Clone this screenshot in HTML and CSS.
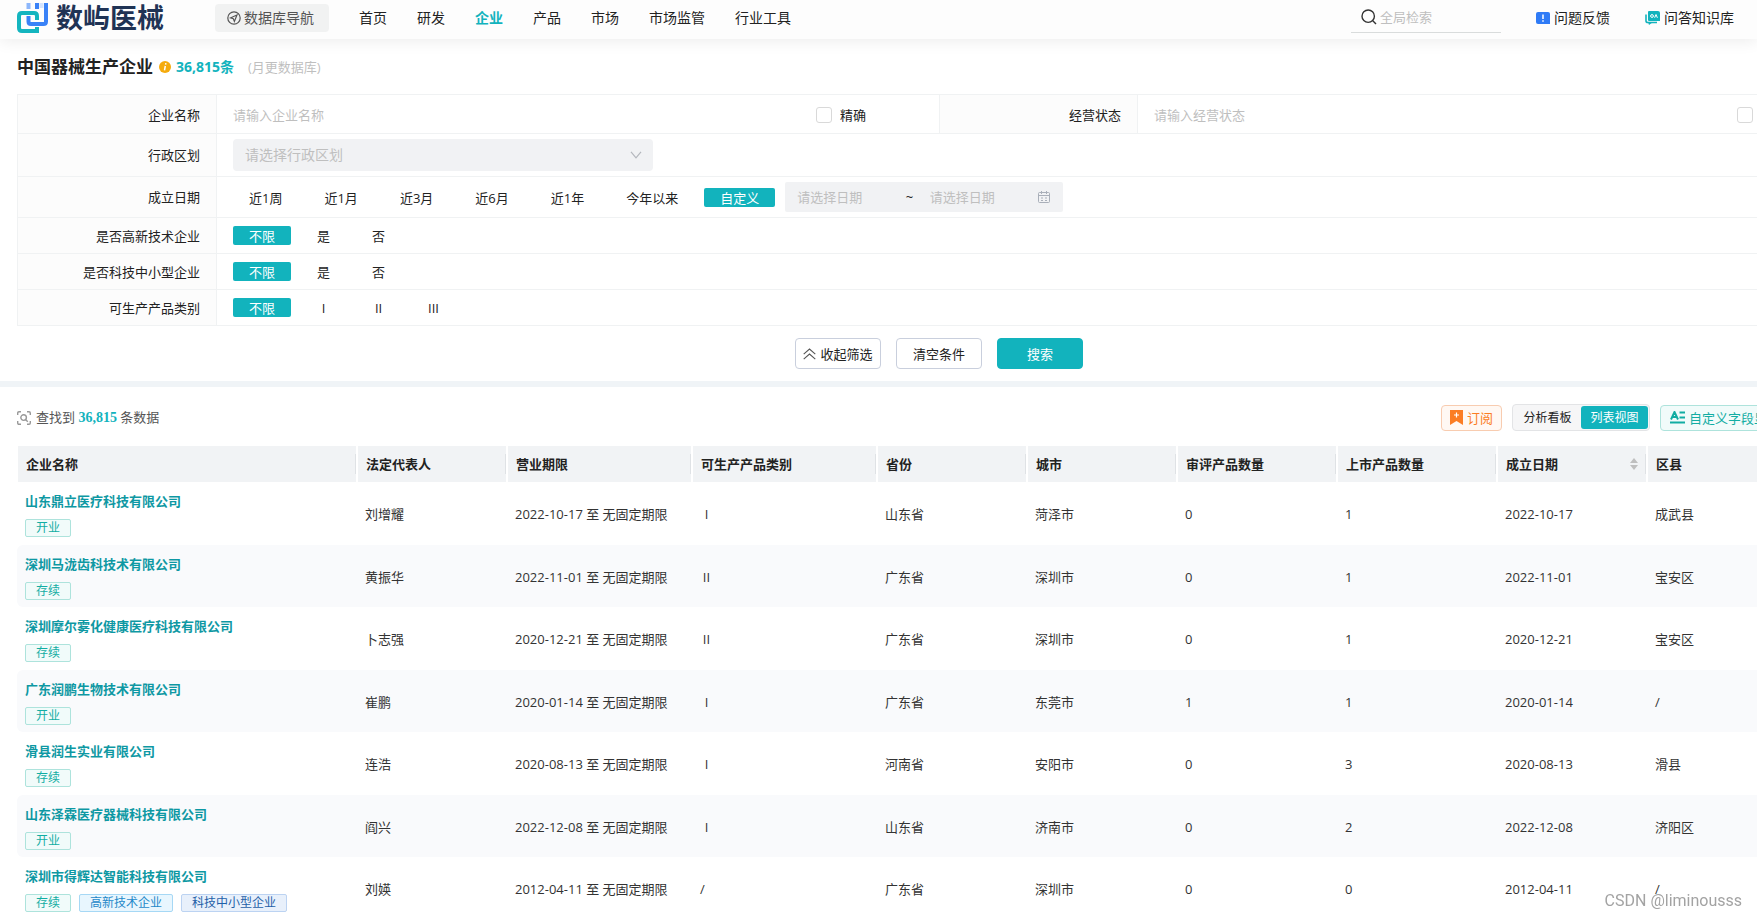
FILE: index.html
```html
<!DOCTYPE html>
<html lang="zh-CN">
<head>
<meta charset="utf-8">
<title>中国器械生产企业</title>
<link rel="stylesheet" href="styles.css">
</head>
<body>
<header class="topbar">
  <a class="brand" href="#">
    <svg class="brand-mark" width="32" height="32" viewBox="0 0 32 32" fill="none" stroke-width="4">
      <path d="M11.5 1V7" stroke="#8db7fb"/><path d="M24.5 1V6" stroke="#d3e3fe"/><path d="M20 1V7" stroke="#3a82f7"/>
      <path d="M29 1V19.5Q29 22 26.5 22H14Q11.5 22 11.5 19.5V14" stroke="#3a82f7"/>
      <path d="M20 18V14Q20 11 17 11H5Q2 11 2 14V26Q2 29 5 29H20V25" stroke="#14b5bf"/>
    </svg>
    <span class="brand-name">数屿医械</span>
  </a>
  <button class="db-nav" type="button">
    <svg width="14" height="14" viewBox="0 0 14 14" fill="none" stroke="#555" stroke-width="1.2"><circle cx="7" cy="7" r="6.2"/><path d="M10 4 3.6 6.8 6.3 7.7 7.4 10.4Z"/></svg>
    数据库导航
  </button>
  <nav class="menu">
    <a href="#">首页</a><a href="#">研发</a><a class="current" href="#">企业</a><a href="#">产品</a><a href="#">市场</a><a href="#">市场监管</a><a href="#">行业工具</a>
  </nav>
  <label class="search">
    <svg width="16" height="16" viewBox="0 0 16 16" fill="none" stroke="#333" stroke-width="1.4"><circle cx="7.2" cy="7.2" r="6.2"/><path d="M11.8 11.8 15 15"/></svg>
    <input type="text" placeholder="全局检索" aria-label="全局检索">
  </label>
  <a class="help" href="#">
    <svg width="14" height="12" viewBox="0 0 14 12"><path d="M2 0H12Q14 0 14 2V12H2Q0 12 0 10V2Q0 0 2 0Z" fill="#2f7bf6"/><path d="M7 2.5V7M7 8.3V9.8" stroke="#fff" stroke-width="1.5"/></svg>
    问题反馈
  </a>
  <a class="help" href="#">
    <svg width="15" height="14" viewBox="0 0 15 14"><path d="M4 0H13Q15 0 15 2V10H4Q3 10 3 9V1Q3 0 4 0Z" fill="#12b3bd"/><path d="M1 3.5V10Q1 11.5 3 11.5H12" stroke="#12b3bd" fill="none" stroke-width="1.6"/><path d="M3 11H8L4 14Z" fill="#12b3bd"/><circle cx="7" cy="5" r="1.4" fill="none" stroke="#fff"/><path d="M9.6 6.8 11 3.5 12.4 6.8" fill="none" stroke="#fff"/></svg>
    问答知识库
  </a>
</header>

<main class="page">
  <div class="heading">
    <h1>中国器械生产企业</h1>
    <svg width="12" height="12" viewBox="0 0 12 12"><circle cx="6" cy="6" r="6" fill="#f5ab0c"/><path d="M6.9 2.2 6.6 3.6M6.3 5 5.5 9.4" stroke="#fff" stroke-width="1.5"/></svg>
    <strong>36,815条</strong>
    <span class="note">(月更数据库)</span>
  </div>

  <form class="filters">
    <div class="row row-text">
      <label class="name" for="company">企业名称</label>
      <div class="field">
        <input class="plain" id="company" type="text" placeholder="请输入企业名称">
        <label class="exact"><input type="checkbox">精确</label>
      </div>
      <label class="name name-second" for="state">经营状态</label>
      <div class="field">
        <input class="plain" id="state" type="text" placeholder="请输入经营状态">
        <label class="exact"><input type="checkbox">精确</label>
      </div>
    </div>
    <div class="row row-region">
      <label class="name" for="region">行政区划</label>
      <div class="field">
        <div class="select">
          <select id="region"><option>请选择行政区划</option></select>
          <svg width="12" height="8" viewBox="0 0 12 8" fill="none" stroke="#b4b7bd" stroke-width="1.2"><path d="M1 .8 6 6.8 11 .8"/></svg>
        </div>
      </div>
    </div>
    <div class="row row-date">
      <span class="name">成立日期</span>
      <div class="field options">
        <button type="button">近1周</button><button type="button">近1月</button><button type="button">近3月</button><button type="button">近6月</button><button type="button">近1年</button><button type="button">今年以来</button><button class="on" type="button">自定义</button>
        <div class="range">
          <input type="text" placeholder="请选择日期" aria-label="开始日期"><span class="tilde">~</span><input type="text" placeholder="请选择日期" aria-label="结束日期">
          <svg width="12" height="12" viewBox="0 0 12 12" fill="none" stroke="#a9afb9"><rect x=".5" y="1.5" width="11" height="10" rx="1"/><path d="M0 4.5H12M3.5 0V3M8.5 0V3M3 7H5M7 7H9M3 9.5H5M7 9.5H9"/></svg>
        </div>
      </div>
    </div>
    <div class="row row-opt">
      <span class="name">是否高新技术企业</span>
      <div class="field options"><button class="on" type="button">不限</button><button type="button">是</button><button type="button">否</button></div>
    </div>
    <div class="row row-opt">
      <span class="name">是否科技中小型企业</span>
      <div class="field options"><button class="on" type="button">不限</button><button type="button">是</button><button type="button">否</button></div>
    </div>
    <div class="row row-opt">
      <span class="name">可生产产品类别</span>
      <div class="field options"><button class="on" type="button">不限</button><button type="button">I</button><button type="button">II</button><button type="button">III</button></div>
    </div>
    <div class="actions">
      <button type="button"><svg width="13" height="12" viewBox="0 0 13 12" fill="none" stroke="#555" stroke-width="1.1"><path d="M.7 6.2 6.5 1 12.3 6.2M.7 11.2 6.5 6 12.3 11.2"/></svg>收起筛选</button>
      <button type="reset">清空条件</button>
      <button class="primary" type="submit">搜索</button>
    </div>
  </form>

  <section class="results">
    <div class="toolbar">
      <p class="found">
        <svg width="14" height="14" viewBox="0 0 14 14" fill="none" stroke="#999" stroke-width="1.4"><path d="M.7 4V2Q.7.7 2 .7H4M10 .7H12Q13.3.7 13.3 2V4M13.3 10V12Q13.3 13.3 12 13.3H10M4 13.3H2Q.7 13.3.7 12V10"/><circle cx="6.6" cy="6.6" r="2.8"/><path d="M8.7 8.7 10.8 10.8"/></svg>
        <span>查找到 <b>36,815</b> 条数据</span>
      </p>
      <button class="tool subscribe" type="button"><svg width="13" height="15" viewBox="0 0 13 15"><path d="M0 0H13V15L6.5 11 0 15Z" fill="#fb7d24"/><path d="M6.5 2.5V7.5M4 5H9" stroke="#fff" stroke-width="1.2"/></svg>订阅</button>
      <div class="toggle"><button type="button">分析看板</button><button class="on" type="button">列表视图</button></div>
      <button class="tool fields" type="button"><svg width="15" height="13" viewBox="0 0 15 13" fill="none" stroke="#12ada3" stroke-width="2"><path d="M1 8.5 4.5 1 8 8.5M2.5 6H6.5M9.5 1.5H15M9.5 6.5H15M0 11.5H15"/></svg>自定义字段显示</button>
    </div>

    <table class="grid">
      <colgroup><col class="c-name"><col class="c-m"><col class="c-l"><col class="c-l"><col class="c-m"><col class="c-m"><col class="c-n"><col class="c-n"><col class="c-m"><col></colgroup>
      <thead>
        <tr><th>企业名称</th><th>法定代表人</th><th>营业期限</th><th>可生产产品类别</th><th>省份</th><th>城市</th><th>审评产品数量</th><th>上市产品数量</th><th><div class="sortable">成立日期<svg width="8" height="12" viewBox="0 0 8 12" fill="#bfbfbf"><path d="M0 5 4 0 8 5ZM0 7 4 12 8 7Z"/></svg></div></th><th>区县</th></tr>
      </thead>
      <tbody>
        <tr><td><a href="#">山东鼎立医疗科技有限公司</a><div class="tags"><span>开业</span></div></td><td>刘增耀</td><td>2022-10-17 至 无固定期限</td><td><span class="grade">I</span></td><td>山东省</td><td>菏泽市</td><td>0</td><td>1</td><td>2022-10-17</td><td>成武县</td></tr>
        <tr><td><a href="#">深圳马泷齿科技术有限公司</a><div class="tags"><span>存续</span></div></td><td>黄振华</td><td>2022-11-01 至 无固定期限</td><td><span class="grade">II</span></td><td>广东省</td><td>深圳市</td><td>0</td><td>1</td><td>2022-11-01</td><td>宝安区</td></tr>
        <tr><td><a href="#">深圳摩尔雾化健康医疗科技有限公司</a><div class="tags"><span>存续</span></div></td><td>卜志强</td><td>2020-12-21 至 无固定期限</td><td><span class="grade">II</span></td><td>广东省</td><td>深圳市</td><td>0</td><td>1</td><td>2020-12-21</td><td>宝安区</td></tr>
        <tr><td><a href="#">广东润鹏生物技术有限公司</a><div class="tags"><span>开业</span></div></td><td>崔鹏</td><td>2020-01-14 至 无固定期限</td><td><span class="grade">I</span></td><td>广东省</td><td>东莞市</td><td>1</td><td>1</td><td>2020-01-14</td><td>/</td></tr>
        <tr><td><a href="#">滑县润生实业有限公司</a><div class="tags"><span>存续</span></div></td><td>连浩</td><td>2020-08-13 至 无固定期限</td><td><span class="grade">I</span></td><td>河南省</td><td>安阳市</td><td>0</td><td>3</td><td>2020-08-13</td><td>滑县</td></tr>
        <tr><td><a href="#">山东泽霖医疗器械科技有限公司</a><div class="tags"><span>开业</span></div></td><td>阎兴</td><td>2022-12-08 至 无固定期限</td><td><span class="grade">I</span></td><td>山东省</td><td>济南市</td><td>0</td><td>2</td><td>2022-12-08</td><td>济阳区</td></tr>
        <tr><td><a href="#">深圳市得辉达智能科技有限公司</a><div class="tags"><span>存续</span><span class="tech">高新技术企业</span><span class="small">科技中小型企业</span></div></td><td>刘媖</td><td>2012-04-11 至 无固定期限</td><td>/</td><td>广东省</td><td>深圳市</td><td>0</td><td>0</td><td>2012-04-11</td><td>/</td></tr>
      </tbody>
    </table>
  </section>
</main>
<div class="watermark">CSDN @liminousss</div>
</body>
</html>
```

FILE: styles.css
```css
* { box-sizing: border-box; }
html, body { height: 100%; overflow: hidden; }
body {
  margin: 0;
  background: #fff;
  color: #222;
  font: 13px/20px "Open Sans", "Noto Sans CJK SC", sans-serif;
}
a { color: inherit; text-decoration: none; }
button, input, select { font: inherit; color: inherit; border: 0; padding: 0; margin: 0; background: none; outline: 0; }
svg { flex: none; display: block; }
::placeholder { color: #bfbfbf; opacity: 1; }

.topbar {
  position: relative;
  display: flex;
  align-items: center;
  height: 39px;
  padding: 0 23px 4px 17px;
  background: #fdfdfd;
  box-shadow: 0 2px 16px rgba(0, 0, 0, .08);
  font-size: 14px;
  white-space: nowrap;
}
.brand { display: flex; align-items: center; gap: 7px; width: 198px; }
.brand-name { color: #1f3355; font-size: 27px; line-height: 32px; font-weight: 700; }
.db-nav { display: flex; align-items: center; gap: 3px; height: 28px; padding: 0 15px 0 12px; border-radius: 4px; background: #f1f2f2; color: #555; }
.menu { display: flex; gap: 30px; margin-left: 30px; }
.menu .current { color: #12b3bd; font-weight: 700; }
.search { display: flex; align-items: center; gap: 3px; width: 150px; height: 30px; margin-left: auto; padding-left: 10px; border-bottom: 1px solid #d9dcdc; font-size: 13px; }
.search input { flex: 1; min-width: 0; }
.help { display: flex; align-items: center; gap: 4px; margin-left: 35px; }

.page { min-width: 1878px; }
.heading { display: flex; align-items: center; height: 55px; padding: 0 17px; }
h1 { margin: 0 6px 0 0; font-size: 17px; line-height: 24px; }
.heading strong { margin-left: 5px; color: #12b3bd; font-size: 14px; }
.note { margin-left: 14px; color: #bfbfbf; }

.filters { padding: 0 17px; border-bottom: 6px solid #f0f4f7; }
.row { display: flex; border: 1px solid #f0f2f3; border-top: 0; }
.row:first-child { border-top: 1px solid #f0f2f3; }
.name { display: flex; align-items: center; justify-content: flex-end; width: 199px; padding-right: 16px; border-right: 1px solid #f0f2f3; background: #fcfcfc; }
.name-second { border-left: 1px solid #f0f2f3; }
.field { flex: 1; display: flex; align-items: center; padding: 0 16px; }
.row-text { height: 40px; }
.row-text .name, .row-text .field { padding-top: 2px; }
.row-region { height: 43px; }
.row-date { height: 41px; }
.row-opt { height: 36px; }
.plain { flex: 1; }
.exact { display: flex; align-items: center; gap: 8px; padding-right: 57px; }
.exact input { appearance: none; width: 16px; height: 16px; border: 1px solid #d9d9d9; border-radius: 3px; background: #fff; }
.select { display: flex; align-items: center; width: 420px; height: 32px; padding: 0 11px 0 12px; border-radius: 4px; background: #f1f2f4; }
.select select { flex: 1; appearance: none; color: #bfbfbf; font-size: 14px; }
.options { gap: 10px; }
.options button { min-width: 45px; height: 19px; padding: 1px 16px 0; line-height: 18px; }
.options .on { border-radius: 2px; background: #12b3bd; color: #fff; }
.range { display: flex; align-items: center; width: 278px; height: 30px; padding: 0 13px 0 12px; border-radius: 2px; background: #f1f2f4; }
.range input { flex: 1; min-width: 0; }
.range .tilde { width: 24px; }
.actions { display: flex; justify-content: center; gap: 15px; padding: 12px 0; }
.actions button { display: flex; align-items: center; justify-content: center; gap: 4px; width: 86px; height: 31px; border: 1px solid #c9cfdd; border-radius: 4px; }
.actions .primary { border-color: #12b3bd; background: #12b3bd; color: #fff; }

.results { padding: 17px 17px 0; }
.toolbar { display: flex; align-items: center; padding: 0 71px 15px 0; }
.found { display: flex; align-items: center; gap: 5px; margin: 0 auto 0 0; color: #555; }
.found b { color: #12b3bd; font-family: "Liberation Serif", serif; font-size: 14px; }
.tool { display: flex; align-items: center; height: 26px; padding: 0 9px; border: 1px solid; border-radius: 4px; }
.subscribe { gap: 4px; padding: 0 8px; border-color: #f8ccb0; background: #fff8f3; color: #fb7d24; }
.fields { gap: 4px; border-color: #aee3dc; background: #f1fbfa; color: #12ada3; }
.toggle { display: flex; margin: 0 10px; padding: 1px; border: 1px solid #e3e4e6; border-radius: 4px; background: #f6f6f7; font-size: 12px; }
.toggle button { width: 67px; height: 23px; padding-top: 1px; border-radius: 3px; }
.toggle .on { background: #12b3bd; color: #fff; }

.grid { width: 100%; table-layout: fixed; border-collapse: separate; border-spacing: 0; color: #333; }
.c-name { width: 340px; }
.c-m { width: 150px; }
.c-l { width: 185px; }
.c-n { width: 160px; }
.grid th { height: 36px; padding: 0 8px; border: solid #fff; border-width: 0 1px; background: linear-gradient(#dfe2e5, #dfe2e5) right center / 1px 20px no-repeat, #f1f3f5; color: #222; text-align: left; }
.sortable { display: flex; align-items: center; justify-content: space-between; }
.grid td { height: 62px; padding: 1px 8px 0; }
.grid td:first-child { vertical-align: top; padding-top: 9px; }
.grid tr:nth-child(odd) td { height: 63px; }
.grid tr:nth-child(even) td { background: #f9fafc; }
.grid td:first-child { border-radius: 6px 0 0 6px; }
.grid td a { display: block; color: #0e98a3; font-weight: 700; }
.tags { display: flex; gap: 8px; padding-top: 8px; font-size: 12px; line-height: 16px; }
.tags span { padding: 0 10px; border: 1px solid #ade3dc; border-radius: 2px; background: #f1fbfa; color: #12ada3; }
.tags .tech { border-color: #a6d8f5; background: #e8f6fe; color: #1e88c9; }
.tags .small { border-color: #bcd3f2; background: #e8f0fb; color: #1f5fa8; }
.grade { display: inline-block; width: 13px; text-align: center; }

.watermark { position: fixed; right: 15px; bottom: 4px; color: #a3a3a3; font: 16px/20px Roboto, sans-serif; }
```
